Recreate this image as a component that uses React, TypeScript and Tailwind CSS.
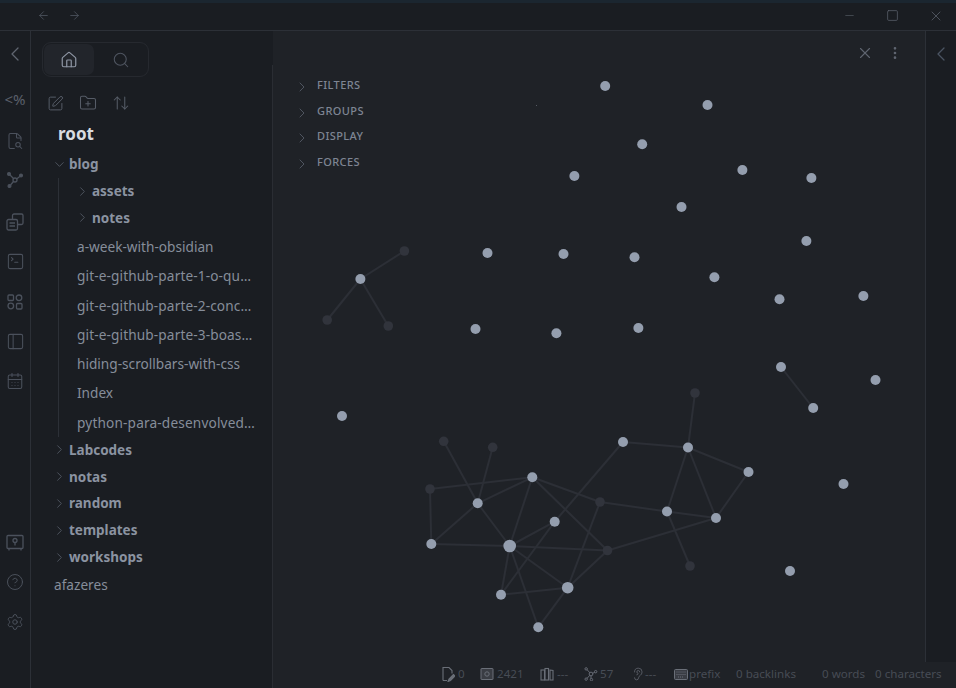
import React from "react";
import {
  ArrowLeft, ArrowRight, ChevronLeft, ChevronRight, ChevronDown, Home, Search, SquarePen, FolderPlus,
  ArrowUpDown, FileSearch2, SquareTerminal, PanelLeft, CalendarDays, CircleHelp,
  Settings, X, Minus, Square, MoreVertical, Ear
} from "lucide-react";

const font = { fontFamily: '"Noto Sans", "Open Sans", sans-serif' };

const N: Record<string, [number, number, number?, boolean?]> = {
  A: [695, 393, 4.8, true], B: [688, 447.5, 5], C: [623, 442, 5], D: [748.5, 472, 5], E: [716, 518, 5], F: [667, 511.5, 5],
  G: [600, 502, 4.8, true], H: [607.5, 550.5, 4.8, true], I: [690, 566, 4.8, true], J: [554.7, 521.7, 5], K: [532.3, 477.3, 5],
  L: [477.7, 503.3, 5], M: [430, 489, 4.8, true], Nn: [443.7, 441.3, 4.8, true], O: [492.7, 447.3, 4.8, true], P: [431.3, 544, 5],
  Q: [509.7, 546, 6.3], R: [567.7, 587.7, 5.8], S: [501, 594.7, 5], T: [538.3, 627.3, 5],
  a: [360.4, 279, 5], b: [404.4, 251, 4.8, true], c: [327.2, 320, 4.8, true], d: [388.3, 326, 4.8, true], e: [781, 367, 5], f: [813.2, 408, 5],
};
const edges = "A-B C-B B-D B-E B-F D-E F-E F-I F-G G-K G-R H-E H-R H-K H-Q K-M K-L K-Q L-Nn L-O L-P L-Q M-P P-Q Q-J J-C J-S Q-S Q-R Q-T S-R T-R a-b a-c a-d e-f".split(" ").map((s) => s.split("-"));
const free: [number, number][] = [[605.2, 86], [707.5, 105], [642.2, 144.3], [574.4, 176], [742.4, 170], [811.4, 178], [681.5, 207], [806.4, 241], [487.5, 253], [563.5, 254], [634.5, 257.3], [714.4, 277.3], [779.5, 299.3], [863.4, 296], [475.5, 329], [556.4, 333.3], [638.4, 328], [875.5, 380], [342, 416], [843.5, 484], [790, 571]];

function Ribbon() {
  const c = "text-[#4b515c]";
  return (
    <div className="w-[31px] shrink-0 border-r border-[#2c3037] bg-[#1a1d22] flex flex-col items-center">
      <ChevronLeft size={24} strokeWidth={1.3} className="mt-[11px] text-[#5f6570] -ml-px" />
      <div className="mt-[23px] h-[20px] text-[15px] leading-[20px] text-[#5a606b]" style={font}>&lt;%</div>
      <FileSearch2 size={18} strokeWidth={1.4} className={`mt-[23px] ${c}`} />
      <svg width="18" height="18" viewBox="0 0 18 18" className={`mt-[21px] ${c}`} fill="none" stroke="currentColor" strokeWidth="1.3">
        <path d="M3.5 3.5 8 8M14.5 5 10.5 8M4.5 14 7.5 10.5" />
        <circle cx="9" cy="9" r="2" /><circle cx="3" cy="3" r="1.4" fill="currentColor" /><circle cx="15" cy="4.5" r="1.4" fill="currentColor" /><circle cx="3.5" cy="15" r="1.4" fill="currentColor" />
      </svg>
      <svg width="18" height="18" viewBox="0 0 18 18" className={`mt-[24px] ${c}`} fill="none" stroke="currentColor" strokeWidth="1.3">
        <rect x="6.5" y="1" width="10.5" height="10.5" rx="1.5" /><rect x="1" y="6.5" width="10.5" height="10.5" rx="1.5" fill="#1a1d22" /><path d="M3.5 10h5.5M3.5 13h5.5" />
      </svg>
      <SquareTerminal size={19} strokeWidth={1.3} className={`mt-[21px] ${c}`} />
      <svg width="16" height="16" viewBox="0 0 16 16" className={`mt-[23px] ${c}`} fill="none" stroke="currentColor" strokeWidth="1.3">
        <rect x="1" y="1" width="5.5" height="5.5" rx="1" /><circle cx="12" cy="3.8" r="2.8" /><circle cx="3.8" cy="12" r="2.8" /><rect x="9.5" y="9.5" width="5.5" height="5.5" rx="1" />
      </svg>
      <PanelLeft size={19} strokeWidth={1.3} className={`mt-[22px] ${c}`} />
      <CalendarDays size={18} strokeWidth={1.4} className={`mt-[21px] ${c}`} />
      <svg width="18" height="18" viewBox="0 0 18 18" className={`mt-[144px] ${c}`} fill="none" stroke="currentColor" strokeWidth="1.3">
        <rect x="1" y="1.5" width="16" height="13" rx="1" /><circle cx="9" cy="6.5" r="2" /><path d="M9 8.5v3M3 14.5v2M15 14.5v2" />
      </svg>
      <CircleHelp size={18} strokeWidth={1.3} className={`mt-[21px] ${c}`} />
      <Settings size={18} strokeWidth={1.3} className={`mt-[22px] ${c}`} />
    </div>
  );
}

function Folder({ name, open, depth = 0 }: { name: string; open?: boolean; depth?: number }) {
  const Icon = open ? ChevronDown : ChevronRight;
  return (
    <div className={`flex items-center h-[26.8px] font-bold text-[13.5px] text-[#8b93a1] ${depth ? "pl-[44px]" : "pl-[21px]"}`}>
      <Icon size={15} strokeWidth={1.5} className="text-[#4f5560] mr-[2px] shrink-0" />
      <span>{name}</span>
    </div>
  );
}

function Note({ name, className = "" }: { name: string; className?: string }) {
  return <div className={`h-[29.3px] leading-[29px] text-[13.65px] text-[#868d9a] whitespace-nowrap pl-[46px] ${className}`}>{name}</div>;
}

function Sidebar() {
  return (
    <div className="w-[242px] shrink-0 bg-[#1a1d22] flex flex-col" style={font}>
      <div className="ml-[11px] mt-[11px] w-[107px] h-[35px] rounded-[9px] border border-[#26292f] flex items-center p-px">
        <div className="w-[50px] h-[31px] rounded-[7px] bg-[#22252b] flex items-center justify-center"><Home size={18} strokeWidth={1.6} className="text-[#8f97a5]" /></div>
        <div className="w-[53px] flex justify-center"><Search size={18} strokeWidth={1.4} className="text-[#4f5560]" /></div>
      </div>
      <div className="flex items-center gap-[15px] ml-[16px] mt-[14px] h-[24px] text-[#565c67]">
        <SquarePen size={17} strokeWidth={1.4} />
        <FolderPlus size={18} strokeWidth={1.4} />
        <ArrowUpDown size={18} strokeWidth={1.4} />
      </div>
      <div className="pl-[27px] mt-[5px] h-[28px] leading-[28px] font-bold text-[17px] text-[#d8dbe0]">root</div>
      <div className="h-[3px]" />
      <Folder name="blog" open />
      <div className="relative mb-[-0.6px]">
        <div className="absolute left-[27px] top-0 bottom-0 w-px bg-[#2c3037]" />
        <Folder name="assets" depth={1} />
        <Folder name="notes" depth={1} />
        <div className="h-[0.6px]" />
        <Note name="a-week-with-obsidian" />
        <Note name="git-e-github-parte-1-o-qu…" className="tracking-[0.12px]" />
        <Note name="git-e-github-parte-2-conc…" className="tracking-[0.12px]" />
        <Note name="git-e-github-parte-3-boas…" className="tracking-[0.12px]" />
        <Note name="hiding-scrollbars-with-css" />
        <Note name="Index" />
        <Note name="python-para-desenvolved…" className="tracking-[0.16px]" />
      </div>
      <Folder name="Labcodes" />
      <Folder name="notas" />
      <Folder name="random" />
      <Folder name="templates" />
      <Folder name="workshops" />
      <div className="pl-[23px] h-[29px] leading-[29px] text-[13.65px] text-[#868d9a]">afazeres</div>
    </div>
  );
}

function Graph() {
  return (
    <svg viewBox="273 31 652 657" className="absolute inset-0 w-[652px] h-[657px]">
      {edges.map(([a, b], i) => (
        <line key={i} x1={N[a][0]} y1={N[a][1]} x2={N[b][0]} y2={N[b][1]} stroke="#2c2f36" strokeWidth="2" />
      ))}
      <rect x="536" y="105" width="1" height="1" fill="#555a63" />
      {free.map(([x, y], i) => <circle key={i} cx={x} cy={y} r="5" fill="#949eae" />)}
      {Object.entries(N).map(([k, [x, y, r, dim]]) => <circle key={k} cx={x} cy={y} r={r} fill={dim ? "#31343c" : "#949eae"} />)}
    </svg>
  );
}

const si = "shrink-0 text-[#6a6f78]";
const IconFile = () => (
  <svg width="14" height="16" viewBox="0 0 14 16" className={si} fill="none" stroke="currentColor" strokeWidth="1.1">
    <path d="M2 14.5V1.5h6l3 3v3M2 14.5h4" /><path d="M12.5 8.5 8 13l-1 2.5 2.5-1L14 10z" fill="currentColor" />
  </svg>
);
const IconSafe = () => (
  <svg width="14" height="14" viewBox="0 0 14 14" className={si} fill="#3a3d44" stroke="currentColor" strokeWidth="1">
    <rect x="1" y="1.5" width="12" height="11" rx=".5" /><circle cx="7" cy="7" r="2.2" fill="none" />
  </svg>
);
const IconBooks = () => (
  <svg width="14" height="14" viewBox="0 0 14 14" className={si} fill="none" stroke="currentColor" strokeWidth="1.1">
    <rect x="1" y="3" width="3.5" height="10" /><rect x="5" y="1.5" width="3.5" height="11.5" /><path d="M10 3l3 .5v9.5h-3z" />
  </svg>
);
const IconNet = () => (
  <svg width="14" height="14" viewBox="0 0 15 15" className={si} fill="none" stroke="currentColor" strokeWidth="1">
    <path d="M7.5 7.5 2.5 2M7.5 7.5 12 5.5M7.5 7.5 2.5 13M7.5 7.5 7.5 13.5" /><circle cx="7.5" cy="7.5" r="2" fill="#1f2227" />
    <circle cx="2.3" cy="2" r="1.3" fill="#1f2227" /><circle cx="12.5" cy="5" r="1.3" fill="#1f2227" /><circle cx="2.3" cy="13" r="1.3" fill="#1f2227" /><circle cx="8" cy="13.5" r="1.3" fill="#1f2227" />
  </svg>
);
const IconKeys = () => (
  <svg width="14" height="11" viewBox="0 0 14 11" className={si} fill="#3a3d44" stroke="currentColor" strokeWidth="1">
    <rect x=".5" y=".5" width="13" height="10" rx="1" /><path d="M2.5 3h9M2.5 5.5h9M4 8h6" strokeDasharray="1 1" fill="none" />
  </svg>
);

function Stat({ icon, text, w, gap = "gap-[3px]" }: { icon: React.ReactNode; text: string; w: string; gap?: string }) {
  return <div className={`flex items-center ${gap} ${w}`}>{icon}<span>{text}</span></div>;
}

function StatusBar() {
  return (
    <div className="absolute right-0 bottom-0 w-[520px] h-[26px] bg-[#1f2227] flex items-center pb-[2px] pl-[5px] text-[11.6px] leading-[16px] text-[#474c55] whitespace-nowrap">
      <Stat icon={<IconFile />} text="0" w="w-[39px]" />
      <Stat icon={<IconSafe />} text="2421" w="w-[60px]" />
      <Stat icon={<IconBooks />} text="---" w="w-[44px]" />
      <Stat icon={<IconNet />} text="57" w="w-[47px]" gap="gap-[2px]" />
      <Stat icon={<Ear size={14} strokeWidth={1.2} className={si} />} text="---" w="w-[43px]" gap="gap-0" />
      <Stat icon={<IconKeys />} text="prefix" w="w-[62px]" gap="gap-[1px]" />
      <span className="w-[86px]">0 backlinks</span>
      <span className="w-[53px]">0 words</span>
      <span>0 characters</span>
    </div>
  );
}

export default function App() {
  return (
    <div className="w-[956px] h-[688px] flex flex-col overflow-hidden bg-[#1a1d22]" style={font}>
      <div className="h-[3px] bg-[#1b2630]" />
      <div className="h-[28px] shrink-0 border-b border-[#2c3037] flex items-center pb-[2px] text-[#4f5560]">
        <ArrowLeft size={13} strokeWidth={1.5} className="ml-[37px]" />
        <ArrowRight size={13} strokeWidth={1.5} className="ml-[18px]" />
        <Minus size={13} strokeWidth={1.6} className="ml-[762px] text-[#474c55]" />
        <Square size={13} strokeWidth={1.3} className="ml-[30px] text-[#5f6570]" />
        <X size={16} strokeWidth={1.1} className="ml-[29px] text-[#5f6570]" />
      </div>
      <div className="relative flex-1 flex min-h-0">
        <Ribbon />
        <Sidebar />
        <div className="relative w-[652px] shrink-0 bg-[#1f2227]">
          <div className="absolute left-[-1px] top-[34px] bottom-0 w-px bg-[#2a2d33]" />
          <Graph />
          <div className="absolute left-[22px] top-[46px] flex flex-col gap-[7.6px]">
            {["FILTERS", "GROUPS", "DISPLAY", "FORCES"].map((t) => (
              <div key={t} className="flex h-[18px] items-start text-[11px] leading-[15px] font-medium tracking-[0.4px] text-[#7e8593]">
                <ChevronRight size={16} strokeWidth={1.5} className="mt-[2px] text-[#4f5560] mr-[7px] -ml-px" />{t}
              </div>
            ))}
          </div>
          <X size={18} strokeWidth={1.5} className="absolute left-[583px] top-[13px] text-[#5f6570]" />
          <MoreVertical size={16} strokeWidth={2} className="absolute left-[614px] top-[14px] text-[#5f6570]" />
        </div>
        <div className="flex-1 bg-[#1a1d22] border-l border-[#2c3037] flex justify-center">
          <ChevronLeft size={24} strokeWidth={1.3} className="mt-[11px] text-[#4a5462]" />
        </div>
        <StatusBar />
      </div>
    </div>
  );
}
